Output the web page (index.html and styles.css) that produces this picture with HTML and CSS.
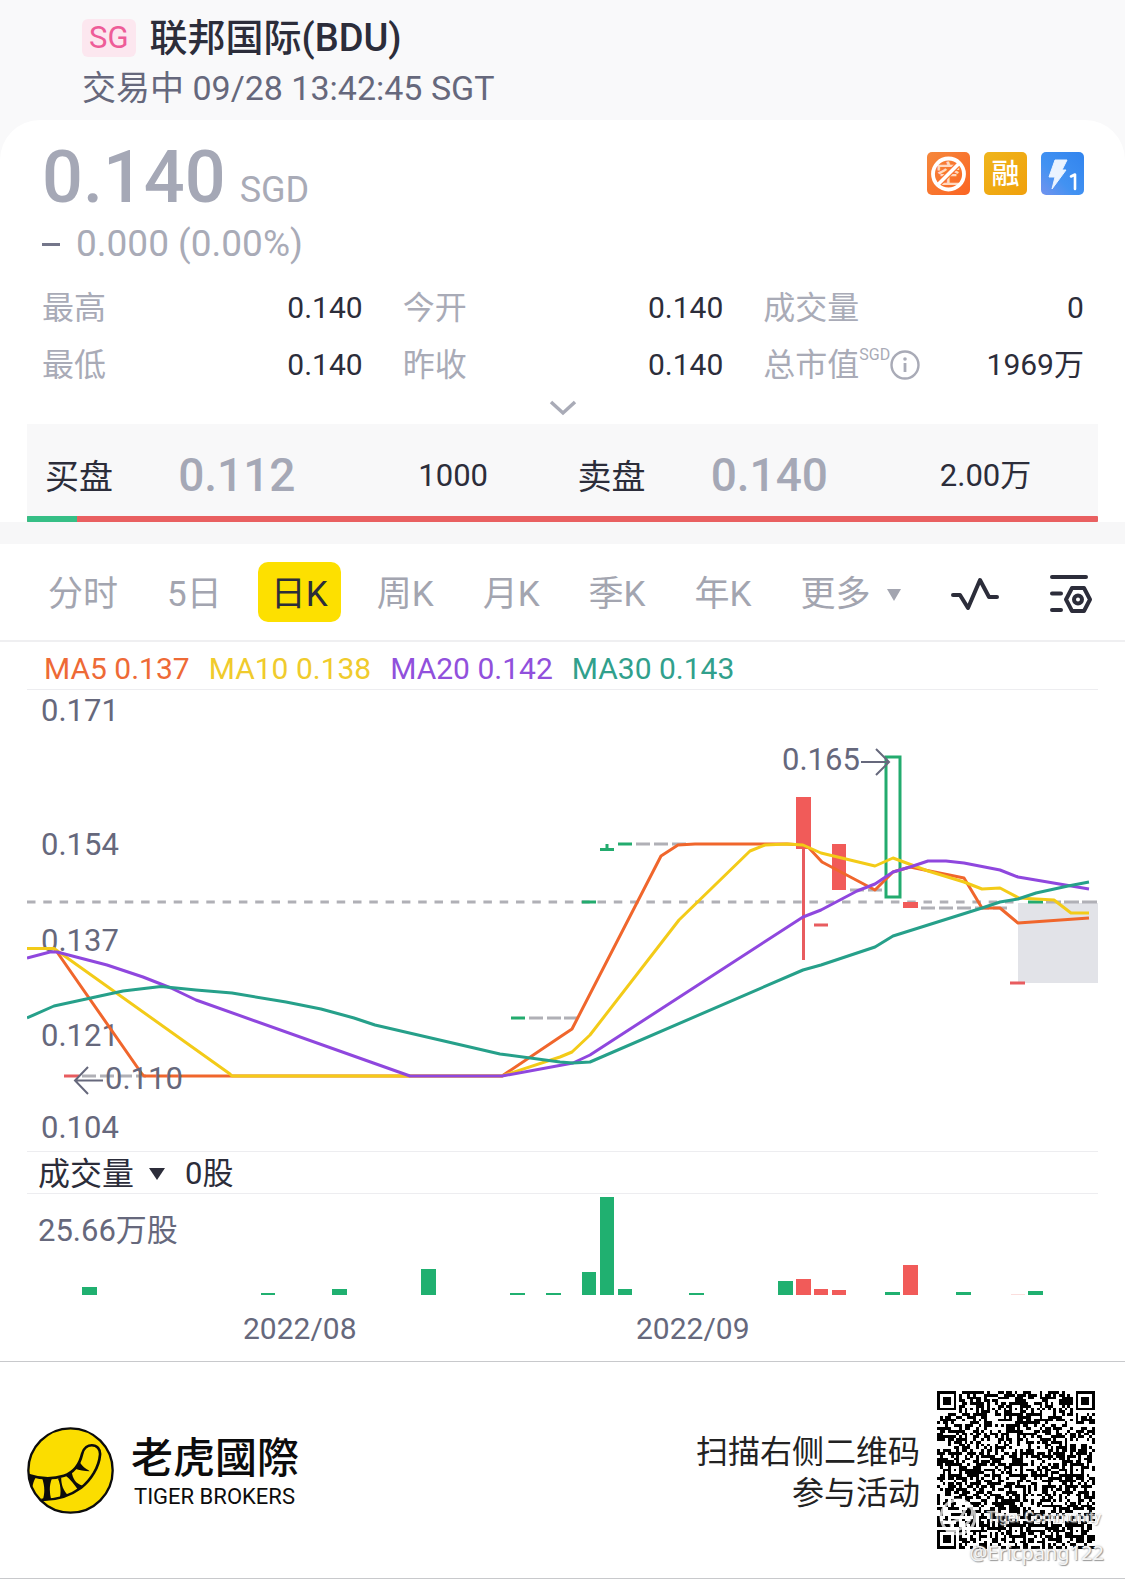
FILE: index.html
```html
<!DOCTYPE html>
<html lang="zh-CN">
<head>
<meta charset="utf-8">
<meta name="viewport" content="width=device-width, initial-scale=1">
<title>联邦国际(BDU)</title>
<link rel="stylesheet" href="styles.css">
</head>
<body>
<header class="header">
  <div class="title-row">
    <span class="market">SG</span>
    <h1 class="title">联邦国际(BDU)</h1>
  </div>
  <p class="status">交易中 09/28 13:42:45 SGT</p>
</header>

<main>
<section class="quote">
  <div class="quote-top">
    <div>
      <p class="price-row"><span class="price">0.140</span><span class="currency">SGD</span></p>
      <p class="change"><span class="dash"></span>0.000 (0.00%)</p>
    </div>
    <div class="badges">
      <svg class="badge" viewBox="0 0 43 43" aria-hidden="true">
        <defs>
          <linearGradient id="og" x1="0" y1="0" x2="1" y2="1"><stop offset="0" stop-color="#f5883c"/><stop offset="1" stop-color="#fb6422"/></linearGradient>
          <linearGradient id="yg" x1="0" y1="0" x2="1" y2="1"><stop offset="0" stop-color="#efb51c"/><stop offset="1" stop-color="#f0a00c"/></linearGradient>
          <linearGradient id="bg" x1="0" y1="1" x2="1" y2="0"><stop offset="0" stop-color="#7393ee"/><stop offset=".4" stop-color="#4292f2"/><stop offset="1" stop-color="#3184ee"/></linearGradient>
        </defs>
        <rect width="43" height="43" rx="5" fill="url(#og)"/>
        <text class="badge-text" x="21.5" y="31" font-size="25" text-anchor="middle" fill="#ffd9c2">空</text>
        <path d="M11 32.500L32 11.500" stroke="#fb7430" stroke-width="6"/>
        <path d="M11 32.500L32 11.500" stroke="#fff" stroke-width="3.600"/>
        <circle cx="21.500" cy="22" r="15.500" fill="none" stroke="#fff" stroke-width="3.800"/>
      </svg>
      <svg class="badge" viewBox="0 0 43 43" aria-hidden="true">
        <rect width="43" height="43" rx="5" fill="url(#yg)"/>
        <text class="badge-text" x="21.5" y="32" font-size="28" text-anchor="middle" fill="#fff">融</text>
      </svg>
      <svg class="badge" viewBox="0 0 43 43" aria-hidden="true">
        <rect width="43" height="43" rx="5" fill="url(#bg)"/>
        <path d="M14 8H26L21 18H25L11 37L14 25H8Z" fill="#eaf3ff" stroke="#eaf3ff" stroke-linejoin="round"/>
        <path d="M30 24.500L34 22.500V37" fill="none" stroke="#fff" stroke-width="2.600" stroke-linecap="round" stroke-linejoin="round"/>
      </svg>
    </div>
  </div>

  <dl class="stats">
    <div class="stat"><dt>最高</dt><dd>0.140</dd></div>
    <div class="stat"><dt>今开</dt><dd>0.140</dd></div>
    <div class="stat"><dt>成交量</dt><dd>0</dd></div>
    <div class="stat"><dt>最低</dt><dd>0.140</dd></div>
    <div class="stat"><dt>昨收</dt><dd>0.140</dd></div>
    <div class="stat"><dt>总市值<span class="unit">SGD</span><svg class="info" viewBox="0 0 30 30" aria-hidden="true"><circle cx="15" cy="15" r="13.500" fill="none" stroke="currentColor" stroke-width="2.400"/><circle cx="15" cy="9" r="1.800" fill="currentColor"/><path d="M15 13V22" stroke="currentColor" stroke-width="2.800"/></svg></dt><dd>1969万</dd></div>
  </dl>

  <button class="expand" type="button" aria-label="展开">
    <svg viewBox="0 0 28 16" width="28" height="16"><path d="M2 2L14 13L26 2" fill="none" stroke="#a9abb7" stroke-width="3.500"/></svg>
  </button>

  <div class="book">
    <div class="book-row">
      <span class="side">买盘</span><span class="book-price">0.112</span><span class="qty">1000</span>
      <span class="side">卖盘</span><span class="book-price">0.140</span><span class="qty">2.00万</span>
    </div>
    <div class="ratio"><span class="ratio-buy" style="width:4.7%"></span></div>
  </div>
</section>

<section class="kline">
  <nav class="tabs">
    <button class="tab" type="button">分时</button>
    <button class="tab" type="button">5日</button>
    <button class="tab active" type="button">日K</button>
    <button class="tab" type="button">周K</button>
    <button class="tab" type="button">月K</button>
    <button class="tab" type="button">季K</button>
    <button class="tab" type="button">年K</button>
    <button class="tab more" type="button">更多<svg viewBox="0 0 16 12" width="16" height="12"><path d="M1 0H15L8 12Z" fill="#a3a5b0"/></svg></button>
    <span class="tools">
      <button class="tool" type="button" aria-label="指标">
        <svg viewBox="0 0 48 34" width="48" height="34"><path d="M2 18H9L17 31L29 3L38 20H46" fill="none" stroke="#2c2d3a" stroke-width="4" stroke-linecap="round" stroke-linejoin="round"/></svg>
      </button>
      <button class="tool" type="button" aria-label="设置">
        <svg viewBox="0 0 44 40" width="44" height="40"><g fill="none" stroke="#2c2d3a" stroke-width="4" stroke-linecap="round" stroke-linejoin="round"><path d="M3 3H37M3 19.500H12M3 36H12"/><path d="M23 14H35L41 25.500L35 37H23L17 25.500Z"/><circle cx="29" cy="25.500" r="4"/></g></svg>
      </button>
    </span>
  </nav>

  <div class="ma">
    <span class="ma5">MA5 0.137</span><span class="ma10">MA10 0.138</span><span class="ma20">MA20 0.142</span><span class="ma30">MA30 0.143</span>
  </div>

  <svg class="chart" viewBox="27 690 1071 461" role="img" aria-label="日K线图">
    <g class="axis">
      <text x="41" y="721">0.171</text>
      <text x="41" y="855">0.154</text>
      <text x="41" y="951">0.137</text>
      <text x="41" y="1046">0.121</text>
      <text x="41" y="1138">0.104</text>
    </g>
    <path class="prev" d="M27 902H1017"/>
    <rect x="1018" y="903" width="80" height="80" fill="#e2e3e8"/>
    <g class="flat">
      <path d="M82 1076H96M100 1076H114M118 1076H132M136 1076H146"/>
      <path d="M529 1018H543M547 1018H561M564 1018H577"/>
      <path d="M636 844H650M654 844H668M672 844H686"/>
      <path d="M850 890H864M868 890H882"/>
      <path d="M921 908H935M939 908H953M957 908H971M975 908H989M993 908H1007"/>
      <path d="M1046 902H1061M1064 902H1079M1082 902H1097"/>
    </g>
    <g class="up">
      <path d="M511 1018H525M582 902H596M600 849.500H614M607 844V850M618 844H632M1028 902H1043"/>
      <rect x="886" y="757" width="14" height="140"/>
    </g>
    <g class="down">
      <rect x="796" y="797" width="15" height="52"/>
      <rect x="832" y="844" width="14" height="46"/>
      <rect x="903" y="902" width="15" height="6"/>
      <path d="M803.500 849V960M64 1076H79M814 925H828M1010 983H1025"/>
    </g>
    <g class="ma-line">
      <polyline stroke="#f0662c" points="27,948.5 54,948.5 57,952 142,1074 144,1076 502,1076 560,1037 572,1029 661,856 678,845 695,844 787,844 803,845 809,848 822,862 875,890 893,872 910,867 964,878 982,908 1000,908 1018,923 1089,918"/>
      <polyline stroke="#f3cb18" points="27,948.5 54,948.5 230,1074 232,1076 502,1076 560,1057 572,1052 590,1035 679,920 750,851 765,845 787,844 803,845 821,853 875,866 893,858 928,871 964,882 982,889 1000,888 1019,898 1054,900 1071,913 1089,913"/>
      <polyline stroke="#8f47de" points="27,958 50,952 57,952 107,965 143,977 171,988 196,1000 410,1076 502,1076 573,1063 590,1055 803,917 821,910 857,891 875,884 893,872 910,867 928,861 946,861 964,863 1000,870 1018,877 1089,889"/>
      <polyline stroke="#26a08a" points="27,1018 54,1006 123,991 161,986.500 196,990 232,993 286,1002 321,1009 354,1018 375,1025 500,1054 560,1062 573,1063 590,1062 803,970 821,965 875,947 893,936 982,908 1000,902 1018,899 1036,893 1068,886 1089,882"/>
    </g>
    <g class="axis">
      <text x="105" y="1089">0.110</text>
      <text x="782" y="770">0.165</text>
      <path d="M103 1080.500H75M88 1067L75 1080.500L88 1094"/>
      <path d="M861 762H889M876 749L889 762L876 775"/>
    </g>
  </svg>

  <div class="volume-head">
    <button class="volume-name" type="button">成交量<svg viewBox="0 0 16 12" width="16" height="12"><path d="M0 0H16L8 12Z" fill="#2c2d3a"/></svg></button>
    <span class="volume-now">0股</span>
  </div>
  <svg class="chart" viewBox="27 1194 1071 102" role="img" aria-label="成交量">
    <text class="axis" x="38" y="1241">25.66万股</text>
    <g fill="#20b070">
      <rect x="82" y="1287" width="15" height="8"/>
      <rect x="261" y="1293" width="14" height="2"/>
      <rect x="332" y="1289" width="15" height="6"/>
      <rect x="421" y="1269" width="15" height="26"/>
      <rect x="510" y="1293" width="15" height="2"/>
      <rect x="546" y="1293" width="15" height="2"/>
      <rect x="582" y="1272" width="14" height="23"/>
      <rect x="600" y="1197" width="14" height="98"/>
      <rect x="618" y="1289" width="14" height="6"/>
      <rect x="689" y="1293" width="15" height="2"/>
      <rect x="778" y="1281" width="15" height="14"/>
      <rect x="885" y="1292" width="15" height="3"/>
      <rect x="956" y="1292" width="15" height="3"/>
      <rect x="1028" y="1291" width="15" height="4"/>
    </g>
    <g fill="#f15b59">
      <rect x="796" y="1279" width="15" height="16"/>
      <rect x="814" y="1289" width="14" height="6"/>
      <rect x="832" y="1290" width="14" height="5"/>
      <rect x="903" y="1265" width="15" height="30"/>
      <rect x="1011" y="1294" width="14" height="1" fill="#fbdedd"/>
    </g>
  </svg>
  <div class="dates"><span>2022/08</span><span>2022/09</span></div>
</section>
</main>

<footer class="footer">
  <svg class="logo" viewBox="81 79 262 262" aria-hidden="true">
    <defs><clipPath id="disc"><circle cx="212" cy="210" r="127"/></clipPath></defs>
    <circle cx="212" cy="210" r="127" fill="#fbdd00"/>
    <g clip-path="url(#disc)">
      <path d="M80 222C120 236 160 236 192 226C222 216 240 190 247 160C252 140 266 134 276 134C292 134 302 146 301 162C298 200 274 238 244 262C214 284 176 300 124 298" fill="none" stroke="#0c0c0c" stroke-width="8"/>
      <path d="M80 218L108 230C100 242 100 250 96 262L80 250ZM126 232L156 234C148 254 148 276 154 298L128 300C136 276 134 254 126 232ZM174 234L184 232C184 252 190 270 204 284L180 292C184 272 182 252 174 234ZM196 224L216 214C218 234 228 250 248 256L236 270C224 252 212 236 196 224ZM224 204L240 184C246 198 258 204 270 212C254 212 240 210 224 204Z" fill="#0c0c0c"/>
    </g>
    <circle cx="212" cy="210" r="127" fill="none" stroke="#0c0c0c" stroke-width="7"/>
  </svg>
  <div class="brand"><span class="brand-cn">老虎國際</span><span class="brand-en">TIGER BROKERS</span></div>
  <p class="invite">扫描右侧二维码<br>参与活动</p>
  <div class="qr-box">
    <svg class="qr" viewBox="0 0 57 57" shape-rendering="crispEdges" role="img" aria-label="二维码"><path id="qr-modules"/></svg>
    <span class="mark-brand"><svg viewBox="0 0 40 40" width="40" height="40"><circle cx="20" cy="20" r="17"/><path d="M4 24C16 28 24 22 27 12C31 6 36 12 34 18C30 30 18 36 8 34M13 26L14 34M21 22L25 30"/></svg>Tiger Community</span>
    <span class="mark-user">@Ericpang122</span>
  </div>
</footer>
<script src="qr.js"></script>
</body>
</html>
```
FILE: styles.css
```css
* {
  box-sizing: border-box;
}

body {
  margin: 0;
  background: #f9f9fa;
  color: #2c2d3a;
  font-family: Roboto, "Noto Sans CJK SC", sans-serif;
  font-size: 31px;
  line-height: 40px;
}

h1, p, dl, dd {
  margin: 0;
}

button {
  padding: 0;
  border: 0;
  background: none;
  color: inherit;
  font: inherit;
}

svg {
  display: block;
  flex: none;
}

.header {
  padding: 17px 82px 8px;
}

.title-row {
  display: flex;
  align-items: center;
  gap: 14px;
  height: 42px;
}

.market {
  padding: 0 7px;
  border-radius: 6px;
  background: #fce7ef;
  color: #ee5c98;
  font-size: 31px;
  line-height: 38px;
}

.title {
  font-size: 38px;
  font-weight: 500;
  line-height: 44px;
}

.status {
  padding-top: 5px;
  color: #66687c;
  font-size: 34px;
  line-height: 48px;
}

.quote {
  padding: 20px 27px 0;
  border-radius: 40px 40px 0 0;
  background: #fff;
}

.quote-top {
  display: flex;
  justify-content: space-between;
  padding: 0 14px 0 15px;
}

.price-row {
  display: flex;
  align-items: baseline;
  gap: 14px;
  height: 76px;
  line-height: 76px;
}

.price {
  color: #a5a8b6;
  font-size: 72px;
  font-weight: 500;
}

.currency {
  color: #a9abb7;
  font-size: 36px;
}

.change {
  display: flex;
  align-items: center;
  gap: 16px;
  height: 56px;
  color: #a9abb7;
  font-size: 37px;
}

.dash {
  width: 18px;
  height: 3px;
  background: #74768a;
}

.badges {
  display: flex;
  gap: 14px;
  padding-top: 12px;
}

.badge {
  width: 43px;
  height: 43px;
}

.badge-text {
  font-weight: 500;
}

.stats {
  display: grid;
  grid-template-columns: repeat(3, 1fr);
  column-gap: 40px;
  padding: 7px 14px 0 15px;
}

.stat {
  display: flex;
  align-items: center;
  justify-content: space-between;
  height: 57px;
  font-size: 30px;
}

.stat dt {
  display: flex;
  align-items: center;
  color: #a9abb7;
  font-size: 32px;
}

.unit {
  align-self: flex-start;
  font-size: 16px;
  line-height: 20px;
}

.info {
  width: 30px;
  height: 30px;
}

.expand {
  display: flex;
  align-items: flex-start;
  justify-content: center;
  width: 100%;
  height: 31px;
  padding-top: 7px;
}

.book {
  background: #f8f8f9;
}

.book-row {
  display: grid;
  grid-template-columns: 133fr 240fr 159fr 133fr 229fr 158fr;
  align-items: center;
  height: 92px;
  padding: 10px 0 0 18px;
}

.side {
  padding-top: 3px;
  font-size: 34px;
}

.book-price {
  color: #a5a8b6;
  font-size: 46px;
  font-weight: 500;
}

.qty {
  padding-top: 2px;
}

.ratio {
  height: 6px;
  border-radius: 1px;
  background: #e96061;
  overflow: hidden;
}

.ratio-buy {
  display: block;
  height: 100%;
  background: #36bf86;
}

.kline {
  border-top: 22px solid #f7f7f8;
  background: #fff;
}

.tabs {
  display: flex;
  align-items: center;
  gap: 49px;
  height: 98px;
  padding: 0 32px 0 48px;
  border-bottom: 2px solid #efeff1;
}

.tab {
  padding-top: 6px;
  color: #a3a5b0;
  font-size: 35px;
  line-height: 54px;
  white-space: nowrap;
}

.active {
  margin: 0 -13px;
  padding: 6px 13px 0;
  border-radius: 10px;
  background: #fde000;
  color: #2c2d3a;
}

.more {
  display: flex;
  align-items: center;
  gap: 15px;
}

.tools {
  display: flex;
  flex: 1;
  align-items: center;
  justify-content: space-between;
  padding-top: 4px;
}

.ma {
  display: flex;
  align-items: center;
  gap: 19px;
  height: 48px;
  margin: 0 27px;
  padding: 6px 17px 0;
  border-bottom: 1px solid #ededf0;
  font-size: 30px;
}

.ma5 {
  color: #ee6a36;
}

.ma10 {
  color: #f0cb2c;
}

.ma20 {
  color: #9150dc;
}

.ma30 {
  color: #31a08c;
}

.chart {
  width: calc(100% - 54px);
  height: auto;
  margin: 0 27px;
}

.axis {
  fill: #66687c;
  font-size: 31px;
}

.axis path {
  fill: none;
  stroke: #66687c;
  stroke-width: 2px;
}

.prev,
.flat {
  fill: none;
  stroke: #b0b0b6;
  stroke-width: 3px;
}

.prev {
  stroke-dasharray: 8.5 7.8;
}

.up {
  fill: none;
  stroke: #23ab6e;
  stroke-width: 3px;
}

.down {
  fill: #f15b59;
}

.down path {
  stroke: #e85c5f;
  stroke-width: 3px;
}

.ma-line {
  fill: none;
  stroke-width: 3px;
  stroke-linejoin: round;
}

.volume-head {
  display: flex;
  align-items: center;
  gap: 20px;
  height: 43px;
  margin: 0 27px;
  padding: 3px 11px 0;
  border: solid #ededf0;
  border-width: 1px 0;
}

.volume-name {
  display: flex;
  align-items: center;
  gap: 15px;
  font-size: 32px;
}

.dates {
  display: grid;
  grid-template-columns: 393px 1fr;
  padding: 13px 0 12px 243px;
  color: #66687c;
  font-size: 30px;
}

.footer {
  display: flex;
  align-items: center;
  height: 218px;
  padding: 0 30px 0 27px;
  border: solid #c8c9cc;
  border-width: 1px 0;
  background: #fff;
}

.logo {
  width: 87px;
  height: 87px;
}

.brand {
  display: flex;
  flex-direction: column;
  gap: 4px;
  margin-left: 17px;
  padding-top: 4px;
  color: #0c0c0c;
}

.brand-cn {
  font-family: "Noto Sans CJK TC", sans-serif;
  font-size: 42px;
  font-weight: 500;
  line-height: 46px;
}

.brand-en {
  padding-left: 3px;
  font-size: 22px;
  line-height: 30px;
}

.invite {
  margin-left: auto;
  padding-top: 5px;
  color: #222;
  font-size: 32px;
  line-height: 41px;
  text-align: right;
}

.qr-box {
  position: relative;
  margin-left: 17px;
}

.qr {
  width: 158px;
  height: 158px;
}

.mark-brand,
.mark-user {
  position: absolute;
  color: #fff;
  text-shadow: 1px 1px 1px #999, 0 0 2px #aaa;
  white-space: nowrap;
}

.mark-brand {
  top: 106px;
  right: -6px;
  display: flex;
  align-items: center;
  gap: 8px;
  font-size: 15px;
  opacity: .75;
}

.mark-brand svg {
  fill: none;
  stroke: #fff;
  stroke-width: 3px;
}

.mark-user {
  top: 146px;
  right: -9px;
  color: #f4f4f4;
  font-family: "Noto Sans", sans-serif;
  font-size: 20px;
  line-height: 32px;
}
```
FILE: qr.js
```js
// Fills the QR symbol: finder, alignment and timing patterns plus data modules.
(function () {
  var size = 57;
  var seed = 20220928;
  var d = "";

  function random() {
    seed = (seed * 1664525 + 1013904223) % 4294967296;
    return seed / 4294967296;
  }

  function ring(x, y, cx, cy) {
    return Math.max(Math.abs(x - cx), Math.abs(y - cy));
  }

  function isDark(x, y) {
    var data = random() < 0.52;
    var finders = [[3, 3], [size - 4, 3], [3, size - 4]];
    for (var i = 0; i < 3; i++) {
      var r = ring(x, y, finders[i][0], finders[i][1]);
      if (r <= 4) return r !== 2 && r !== 4;
    }
    var spots = [[28, 6], [6, 28], [28, 28], [50, 28], [28, 50], [50, 50]];
    for (var j = 0; j < spots.length; j++) {
      var a = ring(x, y, spots[j][0], spots[j][1]);
      if (a <= 2) return a !== 1;
    }
    if (x === 6 || y === 6) return (x + y) % 2 === 0;
    return data;
  }

  for (var y = 0; y < size; y++) {
    for (var x = 0; x < size; x++) {
      if (isDark(x, y)) d += "M" + x + " " + y + "h1v1h-1z";
    }
  }
  document.getElementById("qr-modules").setAttribute("d", d);
})();
```
